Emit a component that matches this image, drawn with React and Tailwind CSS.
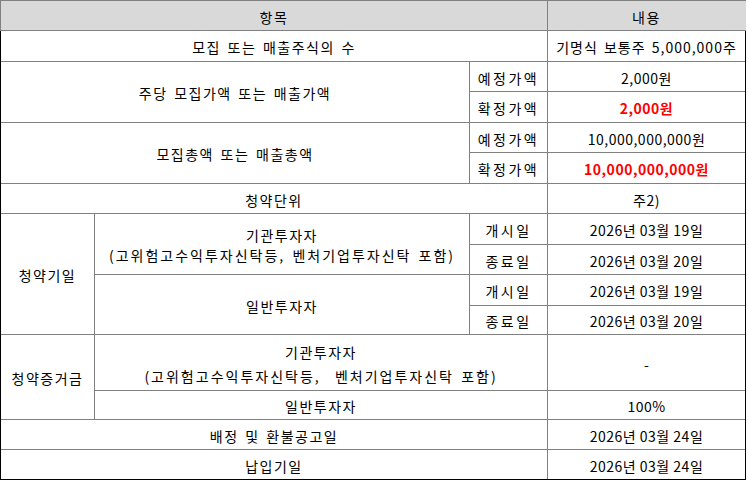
import React from "react";

const base =
  "bg-white flex items-center justify-center text-center text-[14px] leading-none pt-[2px] whitespace-nowrap";

function Cell({ className = "", children }) {
  return <div className={`${base} ${className}`}>{children}</div>;
}

const L = "tracking-[1.5px] [word-spacing:2px]";
const S = "tracking-[2.5px]";
const V = "tracking-[0.5px]";

export default function App() {
  return (
    <div className="w-[748px] h-[482px] bg-white font-['Noto_Sans_CJK_KR','Noto_Sans',sans-serif] text-black">
      <div className="w-[746px]">
        {/* header */}
        <div className="flex h-[31px] border-t border-b border-l border-[#808080] border-r-black bg-[#d9d9d9]">
          <div className={`w-[546px] flex items-center justify-center text-[14px] leading-none pt-[2px] ${L}`}>
            항목
          </div>
          <div className={`w-[198px] border-l border-[#808080] flex items-center justify-center text-[14px] leading-none pt-[2px] ${L}`}>
            내용
          </div>
        </div>
        {/* body */}
        <div className="grid grid-cols-[93px_374px_77px_197px] grid-rows-[30px_29px_30px_29px_30px_29px_30px_29px_30px_28px_55px_28px_29px_29px] gap-px bg-[#808080] border-l border-r border-b border-black">
          <Cell className={`col-span-3 ${L}`}>모집 또는 매출주식의 수</Cell>
          <Cell className="tracking-[1px] [word-spacing:2px]">기명식 보통주 5,000,000주</Cell>

          <Cell className={`col-span-2 row-span-2 ${L}`}>주당 모집가액 또는 매출가액</Cell>
          <Cell className={S}>예정가액</Cell>
          <Cell className={V}>2,000원</Cell>
          <Cell className={S}>확정가액</Cell>
          <Cell className={`text-[#ff0000] font-bold ${V}`}>2,000원</Cell>

          <Cell className={`col-span-2 row-span-2 ${L}`}>모집총액 또는 매출총액</Cell>
          <Cell className={S}>예정가액</Cell>
          <Cell className={V}>10,000,000,000원</Cell>
          <Cell className={S}>확정가액</Cell>
          <Cell className={`text-[#ff0000] font-bold ${V}`}>10,000,000,000원</Cell>

          <Cell className={`col-span-3 ${L}`}>청약단위</Cell>
          <Cell className={V}>주2)</Cell>

          <Cell className={`row-span-4 ${L}`}>청약기일</Cell>
          <Cell className={`row-span-2 flex-col gap-[6px] ${L}`}>
            <span>기관투자자</span>
            <span className="tracking-[2px]">(고위험고수익투자신탁등, 벤처기업투자신탁 포함)</span>
          </Cell>
          <Cell className={S}>개시일</Cell>
          <Cell className={V}>2026년 03월 19일</Cell>
          <Cell className={S}>종료일</Cell>
          <Cell className={V}>2026년 03월 20일</Cell>
          <Cell className={`row-span-2 ${L}`}>일반투자자</Cell>
          <Cell className={S}>개시일</Cell>
          <Cell className={V}>2026년 03월 19일</Cell>
          <Cell className={S}>종료일</Cell>
          <Cell className={V}>2026년 03월 20일</Cell>

          <Cell className={`row-span-2 ${L}`}>청약증거금</Cell>
          <Cell className={`col-span-2 flex-col gap-[10px] ${L}`}>
            <span>기관투자자</span>
            <span className="tracking-[2px]">(고위험고수익투자신탁등,&nbsp;&nbsp;벤처기업투자신탁 포함)</span>
          </Cell>
          <Cell>-</Cell>
          <Cell className={`col-span-2 ${L}`}>일반투자자</Cell>
          <Cell className={V}>100%</Cell>

          <Cell className={`col-span-3 ${L}`}>배정 및 환불공고일</Cell>
          <Cell className={V}>2026년 03월 24일</Cell>

          <Cell className={`col-span-3 ${L}`}>납입기일</Cell>
          <Cell className={V}>2026년 03월 24일</Cell>
        </div>
      </div>
    </div>
  );
}
